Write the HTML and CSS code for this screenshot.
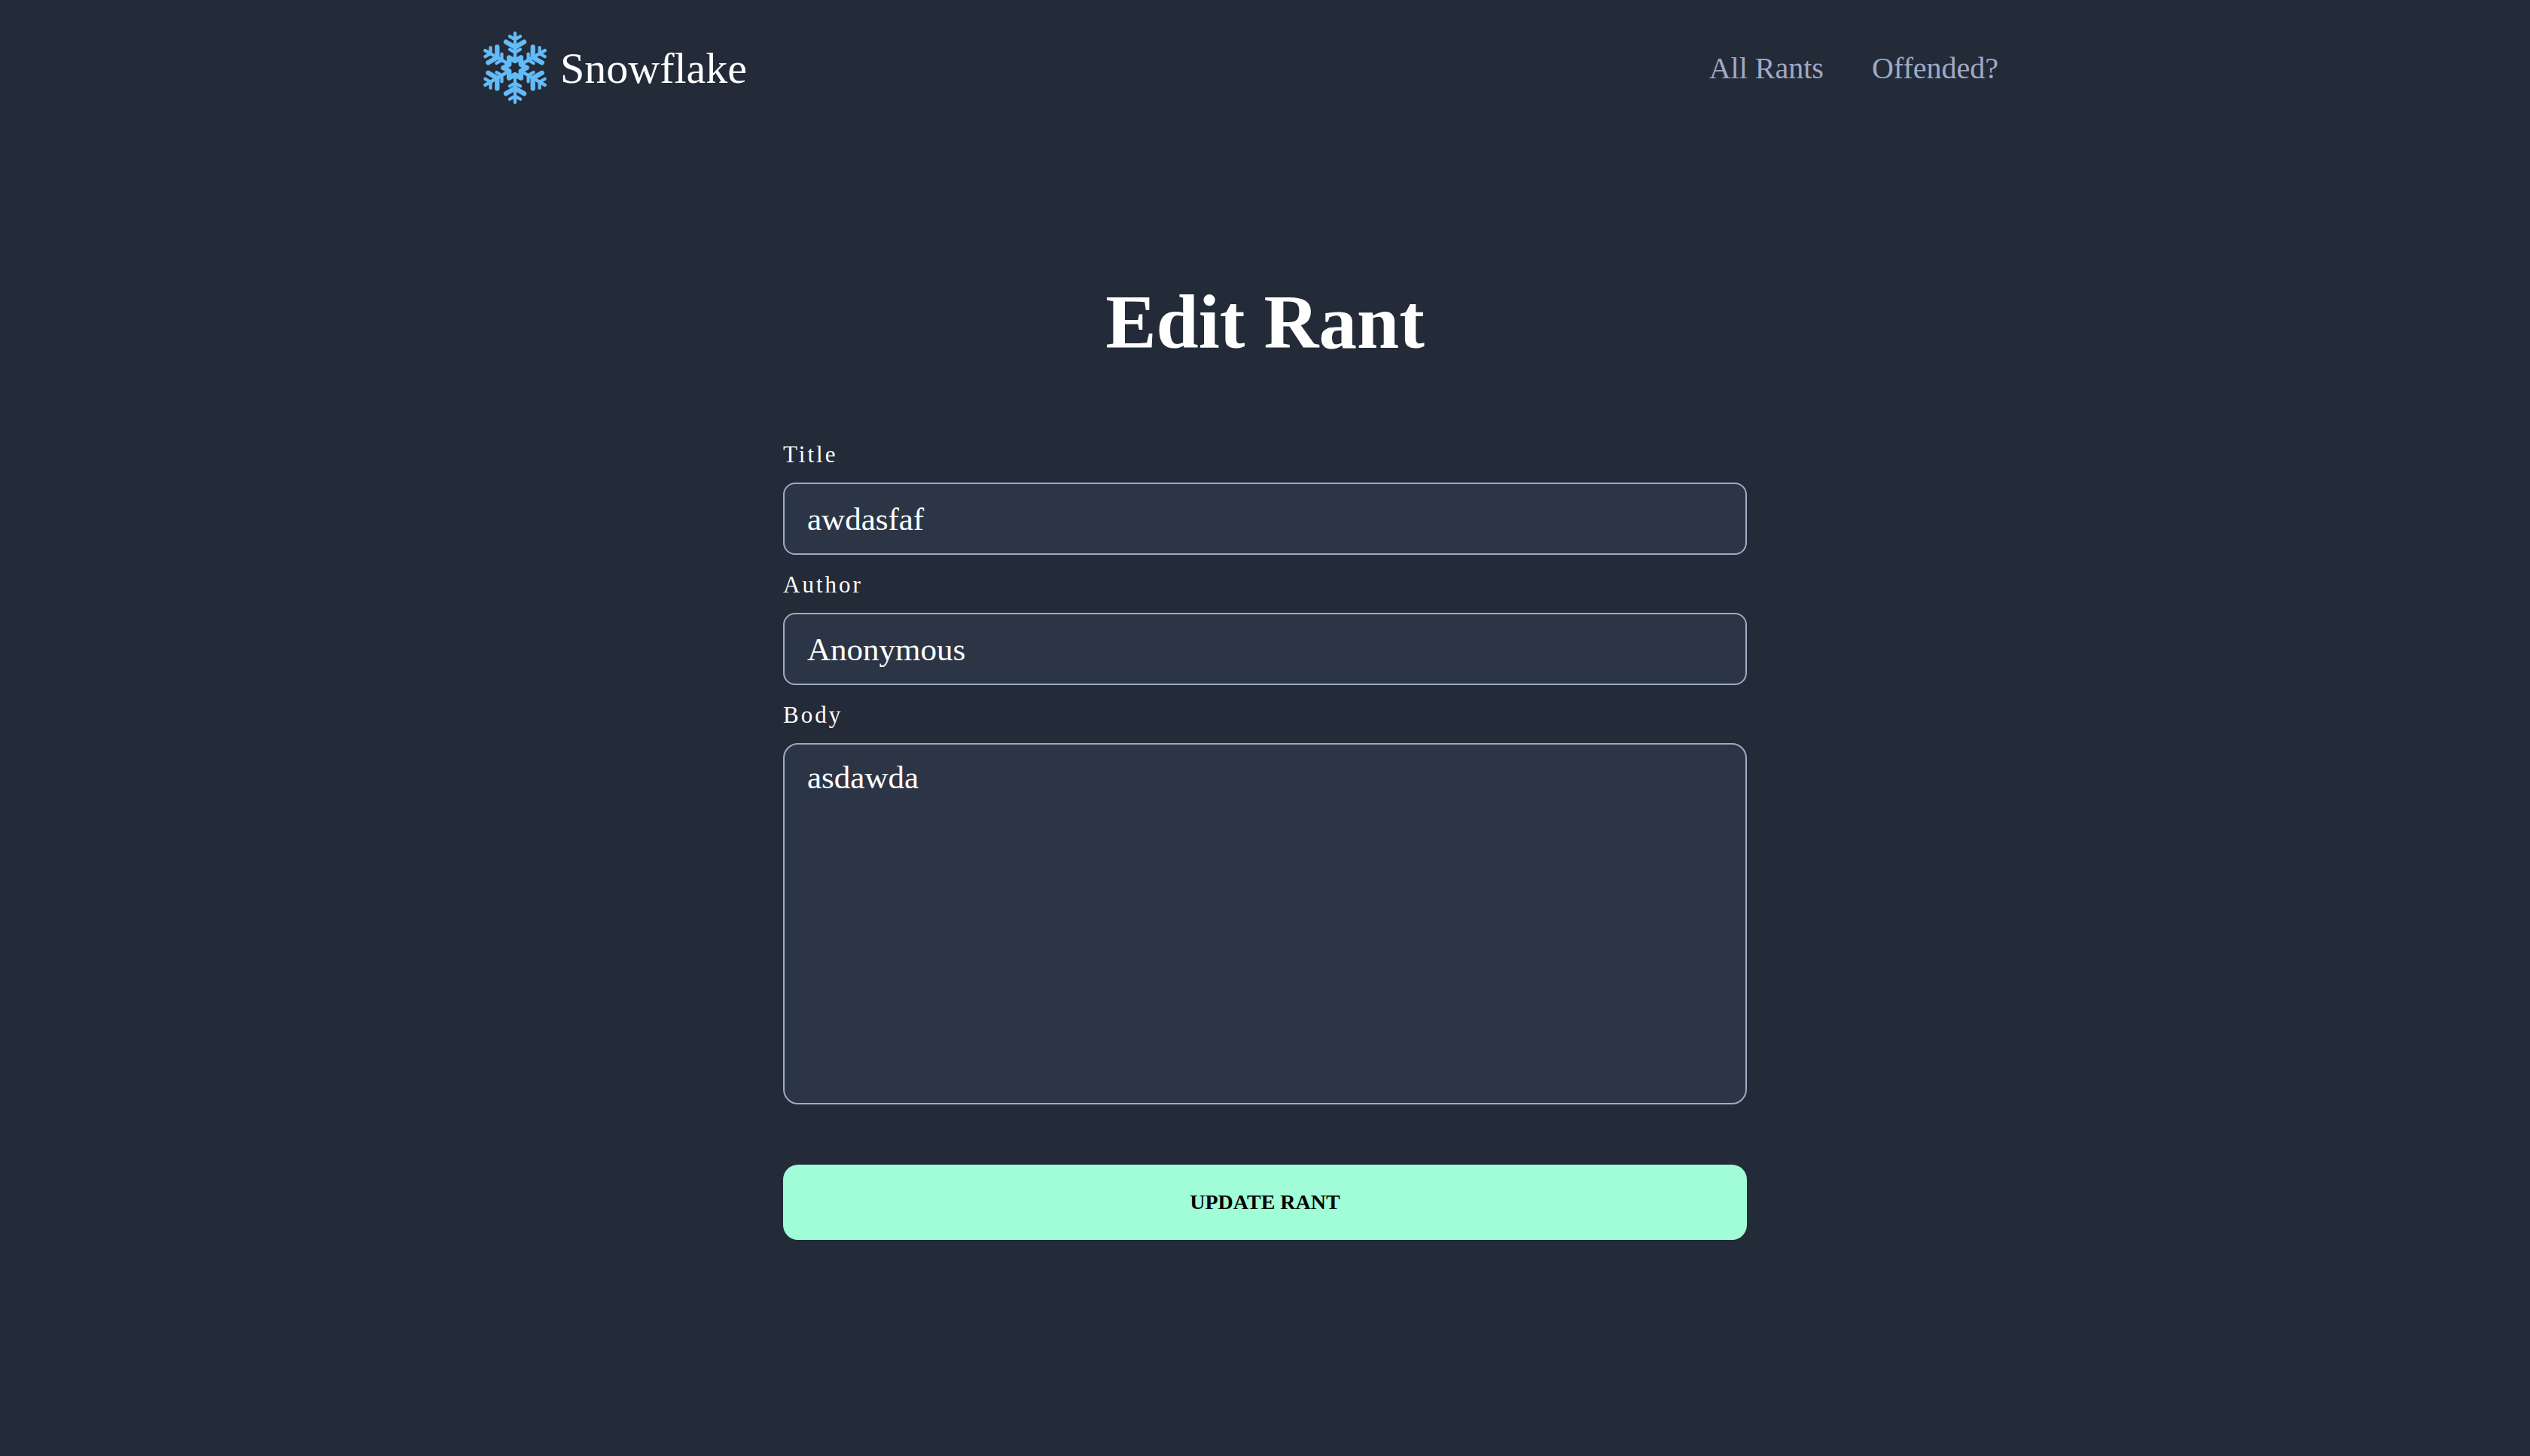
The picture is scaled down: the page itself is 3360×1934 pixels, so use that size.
FILE: index.html
```html
<!DOCTYPE html>
<html lang="en">
<head>
  <meta charset="utf-8">
  <meta name="viewport" content="width=device-width, initial-scale=1">
  <title>Edit Rant</title>
  <link rel="stylesheet" href="styles.css">
</head>
<body>
  <header class="site-header">
    <a class="brand" href="#">
      <svg class="brand-icon" viewBox="-132 -147 264 294" aria-hidden="true">
        <defs>
          <g id="arm">
            <path class="thin" d="M0-138V-30M-21-125 0-113 21-125M-21-73 0-61 21-73"/>
            <path class="thick" d="M-36-103 0-82 36-103"/>
          </g>
        </defs>
        <use href="#arm"/>
        <use href="#arm" transform="rotate(60)"/>
        <use href="#arm" transform="rotate(120)"/>
        <use href="#arm" transform="rotate(180)"/>
        <use href="#arm" transform="rotate(240)"/>
        <use href="#arm" transform="rotate(300)"/>
        <path class="thick" d="M47 0 23 13 24 41 0 27-24 41-23 13-47 0-23-13-24-41 0-27 24-41 23-13Z"/>
      </svg>
      <span>Snowflake</span>
    </a>
    <nav class="site-nav">
      <a href="#">All Rants</a>
      <a href="#">Offended?</a>
    </nav>
  </header>

  <main class="page">
    <h1 class="page-title">Edit Rant</h1>
    <form class="rant-form">
      <div class="field">
        <label for="title">Title</label>
        <input id="title" type="text" value="awdasfaf" spellcheck="false">
      </div>
      <div class="field">
        <label for="author">Author</label>
        <input id="author" type="text" value="Anonymous" spellcheck="false">
      </div>
      <div class="field">
        <label for="body">Body</label>
        <textarea id="body" spellcheck="false">asdawda</textarea>
      </div>
      <button class="submit" type="submit">UPDATE RANT</button>
    </form>
  </main>
</body>
</html>
```

FILE: styles.css
```css
* {
  box-sizing: border-box;
}

body {
  margin: 0;
  min-height: 100vh;
  background: #232b38;
  color: #fff;
  font-family: Baskerville, "Liberation Serif", serif;
}

a {
  color: inherit;
  text-decoration: none;
}

.site-header {
  display: flex;
  align-items: center;
  justify-content: space-between;
  max-width: 2080px;
  min-height: 180px;
  margin: 0 auto;
}

.brand {
  display: flex;
  align-items: center;
  gap: 16px;
  font-size: 58px;
}

.brand-icon {
  width: 88px;
  height: 98px;
  fill: none;
  stroke: #63bbf7;
  stroke-linecap: round;
  stroke-linejoin: round;
}

.thin {
  stroke-width: 13px;
}

.thick {
  stroke-width: 19px;
}

.site-nav {
  display: flex;
  gap: 64px;
  padding-right: 66px;
  color: #a0aac5;
  font-size: 40px;
}

.page {
  max-width: 1280px;
  margin: 0 auto;
  padding: 188px 0 96px;
}

.page-title {
  margin: 0 0 96px;
  font-size: 101px;
  line-height: 120px;
  text-align: center;
}

.rant-form {
  display: flex;
  flex-direction: column;
  gap: 20px;
}

.field {
  display: flex;
  flex-direction: column;
  gap: 17px;
}

.field label {
  font-size: 31px;
  line-height: 40px;
  letter-spacing: 3px;
}

.field input,
.field textarea {
  width: 100%;
  padding: 14px 30px;
  border: 2px solid #a0aac5;
  background: #2c3546;
  color: inherit;
  font-family: inherit;
  font-size: 43px;
  line-height: 60px;
}

.field input {
  height: 96px;
  border-radius: 16px;
}

.field textarea {
  display: block;
  height: 480px;
  border-radius: 20px;
  resize: none;
}

.submit {
  min-height: 100px;
  margin-top: 60px;
  border: 0;
  border-radius: 20px;
  background: #a0fdd8;
  color: #000;
  font-family: inherit;
  font-size: 28px;
  font-weight: 700;
}
```
